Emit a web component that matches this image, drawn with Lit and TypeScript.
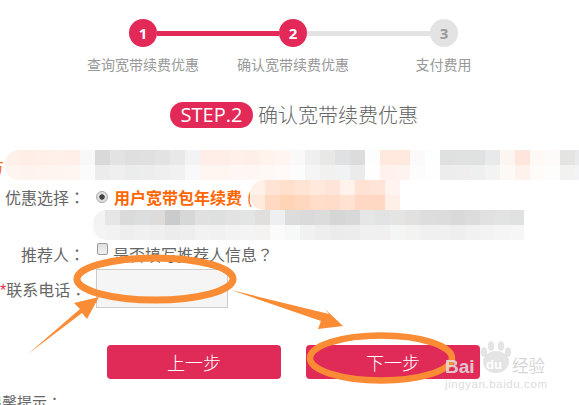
import { LitElement, html, css, svg } from "lit";
import { customElement } from "lit/decorators.js";

const M1 = [
  "fff0e9 ffeee6 ffefe8 fff0ea ffefe8 f8f8f8 d9d9d9 e2e3e2 dedfde dfe0df e2e3e2 e8e8e8 f2f3f5 ffeee8 ffeee8 fff0ea ffefe9 fff3ee fff6f2 f9f9f9 eeefee e8e8e6 e0e1e3 dcdcdc fdfdfd ffe8de ffe8de fbf9f9 fdfefe dfe0e0 dfe1e3 e0e2e2 e8e9ea fbf6f2 ffe5dc fef9f5 fcfbfa e4e4e2 e8eaec",
  "fff5f0 fff3ed fff4ee fff5f0 fff5f1 fbfbfb ececec eeefee ebecec ecedec eeefee f1f1f1 f8f9fa fff6f2 fff6f2 fff7f3 fff7f4 fff9f6 fffaf8 fcfcfc f5f5f5 f1f1f0 f1f2f3 ebebeb fefefe fff2ec fff3ef fdfcfc fefefe ecedec eeeeef eeefef f3f3f4 fdf9f7 fff1eb fefbf9 fdfdfc f2f2f1 f3f4f5",
];
const M2 = [
  "fff0e9 ffe4d5 ffe0cc ffe3d3 ffe9dc ffe5d9 fff3ec ffe2d3 ffe4d7 fff4ef",
  "ffeade ffd9c2 ffd3b6 ffd7bf ffddc9 ffdcca ffe2d2 ffd8c5 ffd7c3 ffefe7",
];
const M3 = [
  "f3f3f3 e6e6e6 d9dada dcdddd dddcdb c9cbcc d6d7d7 e0e0e0 dedfdf e2e2e2 e3e5e5 e0dfde eeeff1 dcdcdc dadada dddcdc d6d6d4 d8d8d8 e4e6e8 e2e3e3 e4e4e3 e2e1df dddddd dcdcdc d9d9d9 dcdcdc e1e1e1 e2e4e4 e0e2e2",
  "f4f4f4 f2f2f2 eeeeee f0f0f0 efefef ececec eeeeee f2f2f2 f1f1f1 f3f3f3 f4f4f4 f4f3f2 fbfbfc f7f8f8 f1f1f1 eeeeee eaebeb ececec f0f0f0 f0f0f0 f4f5f5 f3f3f2 f0f0f0 f0f0f0 eeeeee f1f1f1 f3f3f3 f5f5f5 f6f6f6",
];

const overlay = svg`
  <g fill="#f98c35">
    <polygon points="28,354 80,309 74,303 99,297 87,319 82,313" />
    <polygon points="231,290 329,314 325,309 343,326 318,329 321,321" />
  </g>
  <g fill="none" stroke="#f98c35">
    <ellipse cx="155" cy="279" rx="78" ry="21" stroke-width="7" />
    <ellipse cx="381" cy="358" rx="71" ry="22.5" stroke-width="6.5" />
  </g>
  <g fill="#d9d9d9" fill-opacity=".72">
    <ellipse cx="496" cy="362" rx="13" ry="11" />
    <ellipse cx="484" cy="352" rx="3.2" ry="4.8" />
    <ellipse cx="491" cy="346" rx="3.2" ry="4.8" />
    <ellipse cx="501" cy="346" rx="3.2" ry="4.8" />
    <ellipse cx="508" cy="352" rx="3.2" ry="4.8" />
  </g>
  <g font-family="'Liberation Sans', sans-serif">
    <text x="445" y="373" font-size="19" font-weight="700" fill="#e2e2e2" fill-opacity=".85">Bai</text>
    <text x="486" y="369" font-size="13" font-weight="700" fill="#ffffff">du</text>
    <text x="445" y="388" font-size="11.5" fill="#dcdcdc" textLength="102">jingyan.baidu.com</text>
  </g>
  <text x="512" y="372" font-size="16.5" fill="#d6d6d6" font-family="'Noto Sans CJK SC', sans-serif">经验</text>
`;

@customElement("app-root")
export class AppRoot extends LitElement {
  static styles = css`
    :host {
      display: block;
      position: relative;
      width: 579px;
      height: 405px;
      overflow: hidden;
      background: #fff;
      color: #666;
      font-family: "Noto Sans CJK SC", sans-serif;
      font-size: 16px;
    }
    .stepper {
      display: flex;
      align-items: center;
      padding: 19px 0 0 129px;
    }
    .dot {
      flex: none;
      width: 28px;
      height: 28px;
      border-radius: 50%;
      background: #e22958;
      color: #fff;
      display: flex;
      align-items: center;
      justify-content: center;
      font: 700 15px/1 "Open Sans", sans-serif;
    }
    .dot.off {
      background: #e3e3e3;
      color: #999;
    }
    .line {
      flex: none;
      width: 122px;
      height: 5px;
      background: #e22958;
    }
    .line.off {
      background: #e3e3e3;
      width: 123px;
    }
    .labels {
      display: grid;
      grid-template-columns: 150px 150px 151px;
      margin: 7px 0 0 68px;
      height: 20px;
      line-height: 20px;
      font-size: 14px;
      text-align: center;
      color: #999;
    }
    .title {
      display: flex;
      align-items: center;
      height: 26px;
      margin: 28px 0 0 170px;
      gap: 5px;
      font-size: 20px;
      font-weight: 300;
      line-height: 26px;
    }
    .pill {
      width: 83px;
      height: 26px;
      border-radius: 13px;
      background: #e22958;
      color: #fff;
      text-align: center;
      font: 400 20px/26px "Open Sans", sans-serif;
    }
    .notice {
      height: 32px;
      margin: 22px 0 0 -12px;
      line-height: 32px;
      color: #f60;
    }
    .row {
      display: flex;
      align-items: center;
      height: 24px;
    }
    .row.first {
      margin-top: 3px;
      margin-bottom: 33px;
    }
    .row.phone {
      height: 39px;
      margin-top: 3px;
    }
    .label {
      flex: none;
      width: 85px;
      margin-right: 11px;
      text-align: right;
      white-space: nowrap;
    }
    .colon {
      font-family: "Noto Sans CJK JP", sans-serif;
    }
    .star {
      color: #e22958;
      font-family: "Liberation Sans", sans-serif;
    }
    .offer {
      margin-left: 6px;
      color: #f60;
      font-weight: 700;
      white-space: nowrap;
    }
    .paren {
      margin-left: 5px;
      font-weight: 400;
    }
    .radio {
      appearance: none;
      flex: none;
      margin: 0;
      width: 12px;
      height: 12px;
      border-radius: 50%;
      border: 1px solid #a9a9a9;
      background: radial-gradient(circle, #444 0 2.4px, #dcdcdc 3px, #e8e8e8 100%);
      box-sizing: border-box;
    }
    .check {
      appearance: none;
      flex: none;
      margin: -10px 0 0 1px;
      width: 11px;
      height: 12px;
      border-radius: 2px;
      border: 1px solid #9a9a9a;
      background: linear-gradient(#e0e0e0, #f0f0f0);
      box-sizing: border-box;
    }
    .hint {
      margin-left: 5px;
      white-space: nowrap;
    }
    .phone-input {
      box-sizing: border-box;
      width: 132px;
      height: 39px;
      margin: 0;
      padding: 0;
      border: 1px solid #ccc;
      background: #f5f5f5;
    }
    .actions {
      display: flex;
      gap: 25px;
      margin: 37px 0 0 107px;
    }
    .btn {
      width: 174px;
      height: 34px;
      padding: 0;
      border: 0;
      border-radius: 4px;
      background: #e02a57;
      color: #fff;
      font: 300 18px/34px "Noto Sans CJK SC", sans-serif;
    }
    .tip {
      margin: 13px 0 0 -13px;
      font-size: 15px;
      line-height: 20px;
      white-space: nowrap;
    }
    .mosaic {
      position: absolute;
      display: grid;
      grid-auto-rows: 15px;
      overflow: hidden;
      border-radius: 14px 0 0 14px;
    }
    .mosaic .cells {
      display: flex;
    }
    .mosaic .cell {
      flex: none;
      width: 15px;
      height: 15px;
    }
    .m1 {
      left: 5px;
      top: 150px;
      width: 574px;
    }
    .m2 {
      left: 250px;
      top: 180px;
      width: 155px;
    }
    .m3 {
      left: 93px;
      top: 210px;
      width: 431px;
    }
    .overlay {
      position: absolute;
      left: 0;
      top: 0;
      width: 579px;
      height: 405px;
      pointer-events: none;
    }
  `;

  private mosaic(cls: string, rows: string[], shift: number) {
    return html`<div class="mosaic ${cls}">
      ${rows.map(
        (r) => html`<div class="cells" style="margin-left:${-shift}px">
          ${r.split(" ").map((c) => html`<div class="cell" style="background:#${c}"></div>`)}
        </div>`
      )}
    </div>`;
  }

  render() {
    return html`
      <div class="stepper">
        <div class="dot">1</div>
        <div class="line"></div>
        <div class="dot">2</div>
        <div class="line off"></div>
        <div class="dot off">3</div>
      </div>
      <div class="labels">
        <div>查询宽带续费优惠</div>
        <div>确认宽带续费优惠</div>
        <div>支付费用</div>
      </div>
      <div class="title">
        <div class="pill">STEP.2</div>
        <div>确认宽带续费优惠</div>
      </div>
      <div class="notice">方</div>
      <div class="row first">
        <div class="label">优惠选择<span class="colon">：</span></div>
        <input class="radio" type="radio" checked />
        <div class="offer">用户宽带包年续费<span class="paren">(</span></div>
      </div>
      <div class="row">
        <div class="label">推荐人<span class="colon">：</span></div>
        <input class="check" type="checkbox" />
        <div class="hint">是否填写推荐人信息<span class="colon">？</span></div>
      </div>
      <div class="row phone">
        <div class="label"><span class="star">*</span>联系电话<span class="colon">：</span></div>
        <input class="phone-input" type="text" />
      </div>
      <div class="actions">
        <button class="btn">上一步</button>
        <button class="btn">下一步</button>
      </div>
      <div class="tip">温馨提示<span class="colon">：</span></div>
      ${this.mosaic("m1", M1, 0)}
      ${this.mosaic("m2", M2, 0)}
      ${this.mosaic("m3", M3, 3)}
      <svg class="overlay" viewBox="0 0 579 405">${overlay}</svg>
    `;
  }
}
